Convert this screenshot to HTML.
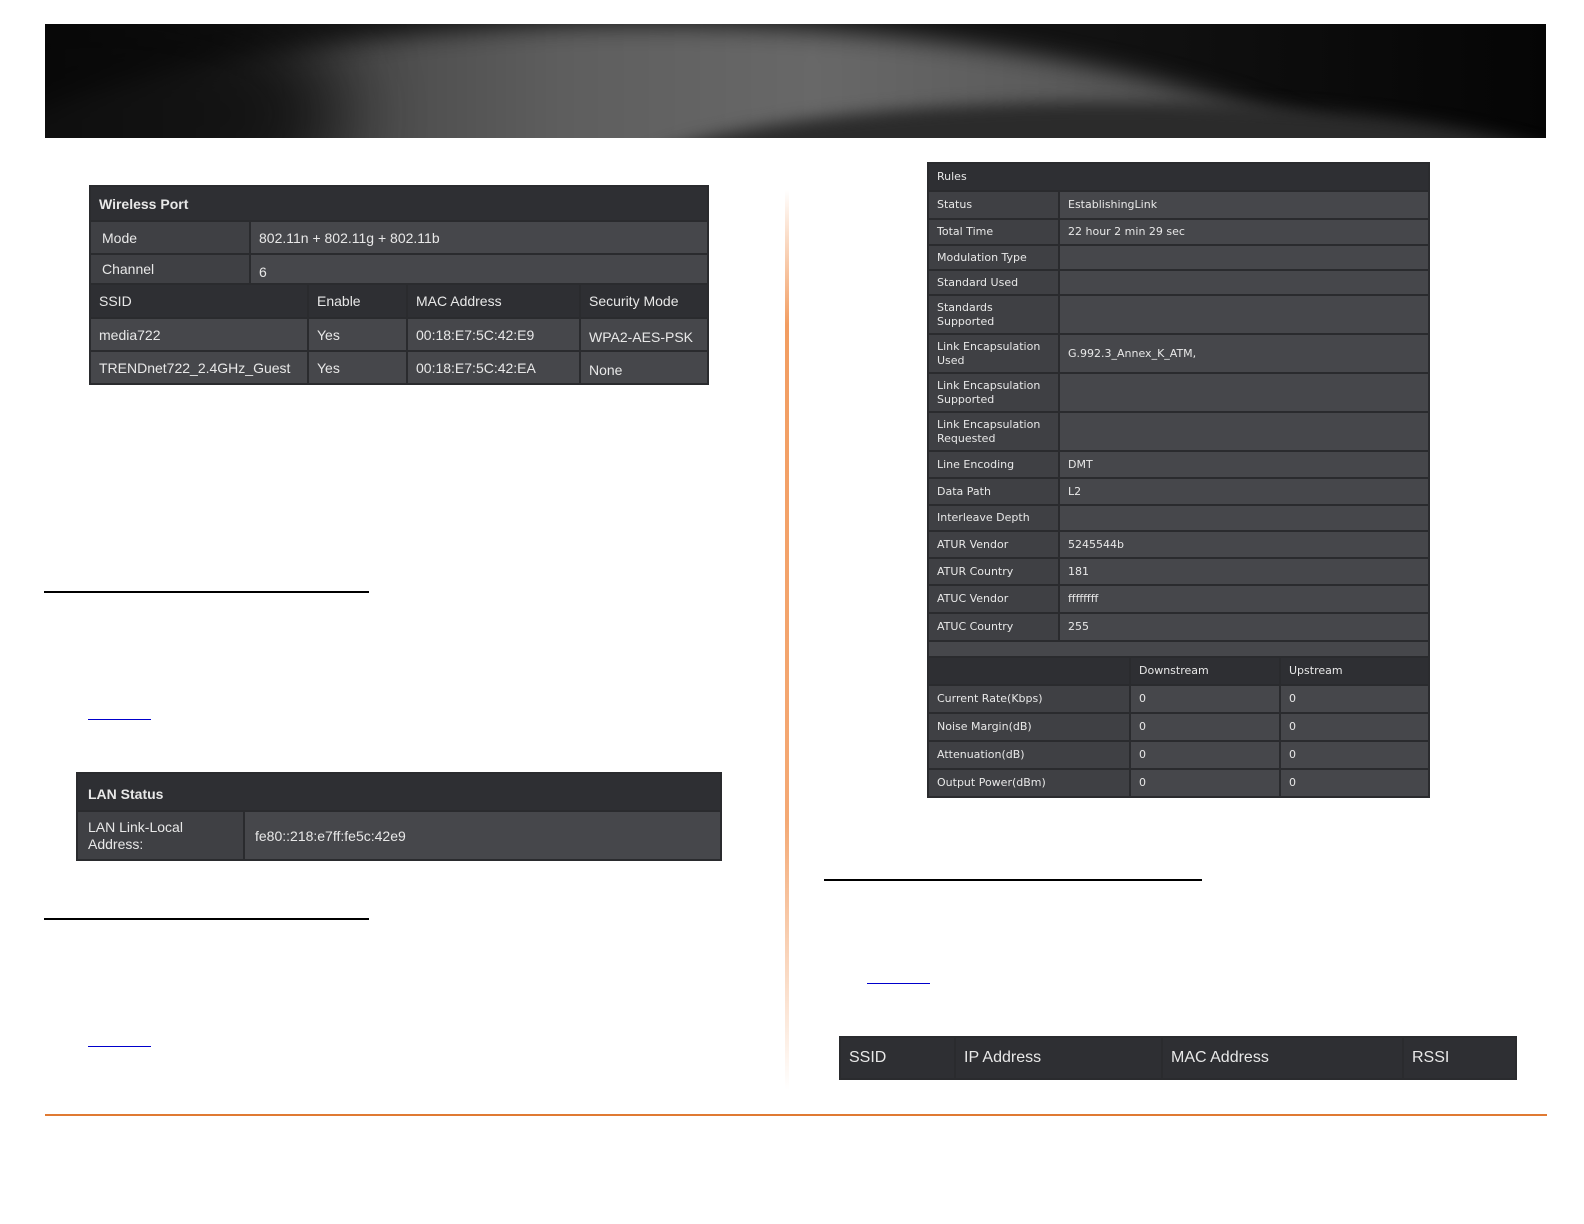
<!DOCTYPE html>
<html><head><meta charset="utf-8"><style>
body{margin:0;width:1584px;height:1224px;background:#fff;position:relative;overflow:hidden;font-family:"DejaVu Sans","Liberation Sans",sans-serif;}
.a{position:absolute;}
table{border-collapse:collapse;table-layout:fixed;position:absolute;background:#46474b;}
td{border:2px solid #2a2b2e;color:#e8e8e8;padding:0 0 0 8px;white-space:nowrap;overflow:hidden;}
.h td{background:#2e2f33;}
.l{background:#3f4044;}
.w td{font-family:"Liberation Sans",sans-serif;font-size:14px;}
.r td{font-size:11px;line-height:14px;}
</style></head><body>
<div class="a" style="left:45px;top:24px;width:1501px;height:114px;overflow:hidden;background:linear-gradient(90deg,#030303,#151515 15%,#121212 70%,#050505);">
  <div class="a" style="left:-250px;top:0px;width:1700px;height:560px;border-radius:50%;filter:blur(12px);background:linear-gradient(90deg,#1a1a1a 10%,#444 30%,#5e5e5e 45%,#686868 60%,#555 80%,#333 95%);"></div>
  <div class="a" style="left:-200px;top:-40px;width:500px;height:260px;border-radius:50%;filter:blur(40px);background:#0a0a0a;opacity:.8"></div>
  <div class="a" style="left:560px;top:78px;width:1000px;height:180px;border-radius:50%;filter:blur(8px);background:#2b2b2b;"></div>
</div>

<table class="w" style="left:89px;top:185px;width:620px;">
<colgroup><col style="width:160px"><col style="width:58px"><col style="width:99px"><col style="width:173px"><col></colgroup>
<tr class="h" style="height:35px"><td colspan="5" style="font-weight:bold;">Wireless Port</td></tr>
<tr style="height:33px"><td class="l" colspan="1" style="padding-left:11px">Mode</td><td colspan="4">802.11n + 802.11g + 802.11b</td></tr>
<tr style="height:30px"><td class="l" style="padding-left:11px">Channel</td><td colspan="4" style="padding-top:6px">6</td></tr>
<tr class="h" style="height:34px"><td colspan="2">SSID</td><td>Enable</td><td>MAC Address</td><td>Security Mode</td></tr>
<tr style="height:33px"><td colspan="2">media722</td><td>Yes</td><td>00:18:E7:5C:42:E9</td><td style="padding-top:4px">WPA2-AES-PSK</td></tr>
<tr style="height:33px"><td colspan="2">TRENDnet722_2.4GHz_Guest</td><td>Yes</td><td>00:18:E7:5C:42:EA</td><td style="padding-top:4px">None</td></tr>
</table>

<div class="a" style="left:44px;top:591px;width:325px;height:2px;background:#000"></div>
<div class="a" style="left:88px;top:719px;width:63px;height:1px;background:#0000cc"></div>

<table class="w" style="left:76px;top:772px;width:646px;">
<colgroup><col style="width:167px"><col></colgroup>
<tr class="h" style="height:38px"><td colspan="2" style="font-weight:bold;padding-left:10px;padding-top:4px">LAN Status</td></tr>
<tr style="height:49px"><td class="l" style="line-height:17px;padding-left:10px">LAN Link-Local<br>Address:</td><td style="padding-left:10px">fe80::218:e7ff:fe5c:42e9</td></tr>
</table>

<div class="a" style="left:44px;top:918px;width:325px;height:2px;background:#000"></div>
<div class="a" style="left:88px;top:1046px;width:63px;height:1px;background:#0000cc"></div>

<div class="a" style="left:785px;top:190px;width:4px;height:900px;background:linear-gradient(180deg,rgba(240,140,70,0),rgba(240,140,70,.85) 15%,rgba(240,140,70,.75) 70%,rgba(240,140,70,0));"></div>

<table class="r" style="left:927px;top:162px;width:503px;">
<colgroup><col style="width:131px"><col style="width:71px"><col style="width:150px"><col></colgroup>
<tr class="h" style="height:28px"><td colspan="4">Rules</td></tr>
<tr style="height:28px"><td class="l">Status</td><td colspan="3">EstablishingLink</td></tr>
<tr style="height:26px"><td class="l">Total Time</td><td colspan="3">22 hour 2 min 29 sec</td></tr>
<tr style="height:25px"><td class="l">Modulation Type</td><td colspan="3"></td></tr>
<tr style="height:25px"><td class="l">Standard Used</td><td colspan="3"></td></tr>
<tr style="height:39px"><td class="l">Standards<br>Supported</td><td colspan="3"></td></tr>
<tr style="height:39px"><td class="l">Link Encapsulation<br>Used</td><td colspan="3">G.992.3_Annex_K_ATM,</td></tr>
<tr style="height:39px"><td class="l">Link Encapsulation<br>Supported</td><td colspan="3"></td></tr>
<tr style="height:39px"><td class="l">Link Encapsulation<br>Requested</td><td colspan="3"></td></tr>
<tr style="height:27px"><td class="l">Line Encoding</td><td colspan="3">DMT</td></tr>
<tr style="height:27px"><td class="l">Data Path</td><td colspan="3">L2</td></tr>
<tr style="height:26px"><td class="l">Interleave Depth</td><td colspan="3"></td></tr>
<tr style="height:27px"><td class="l">ATUR Vendor</td><td colspan="3">5245544b</td></tr>
<tr style="height:27px"><td class="l">ATUR Country</td><td colspan="3">181</td></tr>
<tr style="height:28px"><td class="l">ATUC Vendor</td><td colspan="3">ffffffff</td></tr>
<tr style="height:28px"><td class="l">ATUC Country</td><td colspan="3">255</td></tr>
<tr style="height:16px"><td colspan="4"></td></tr>
<tr class="h" style="height:28px"><td colspan="2"></td><td>Downstream</td><td>Upstream</td></tr>
<tr style="height:28px"><td class="l" colspan="2">Current Rate(Kbps)</td><td>0</td><td>0</td></tr>
<tr style="height:28px"><td class="l" colspan="2">Noise Margin(dB)</td><td>0</td><td>0</td></tr>
<tr style="height:28px"><td class="l" colspan="2">Attenuation(dB)</td><td>0</td><td>0</td></tr>
<tr style="height:28px"><td class="l" colspan="2">Output Power(dBm)</td><td>0</td><td>0</td></tr>
</table>

<div class="a" style="left:824px;top:879px;width:378px;height:2px;background:#000"></div>
<div class="a" style="left:867px;top:983px;width:63px;height:1px;background:#0000cc"></div>

<table class="w" style="left:839px;top:1036px;width:678px;">
<colgroup><col style="width:115px"><col style="width:207px"><col style="width:241px"><col></colgroup>
<tr class="h" style="height:42px"><td style="font-size:16px">SSID</td><td style="font-size:16px">IP Address</td><td style="font-size:16px">MAC Address</td><td style="font-size:16px">RSSI</td></tr>
</table>

<div class="a" style="left:45px;top:1114px;width:1502px;height:2px;background:#e07a33"></div>
</body></html>
